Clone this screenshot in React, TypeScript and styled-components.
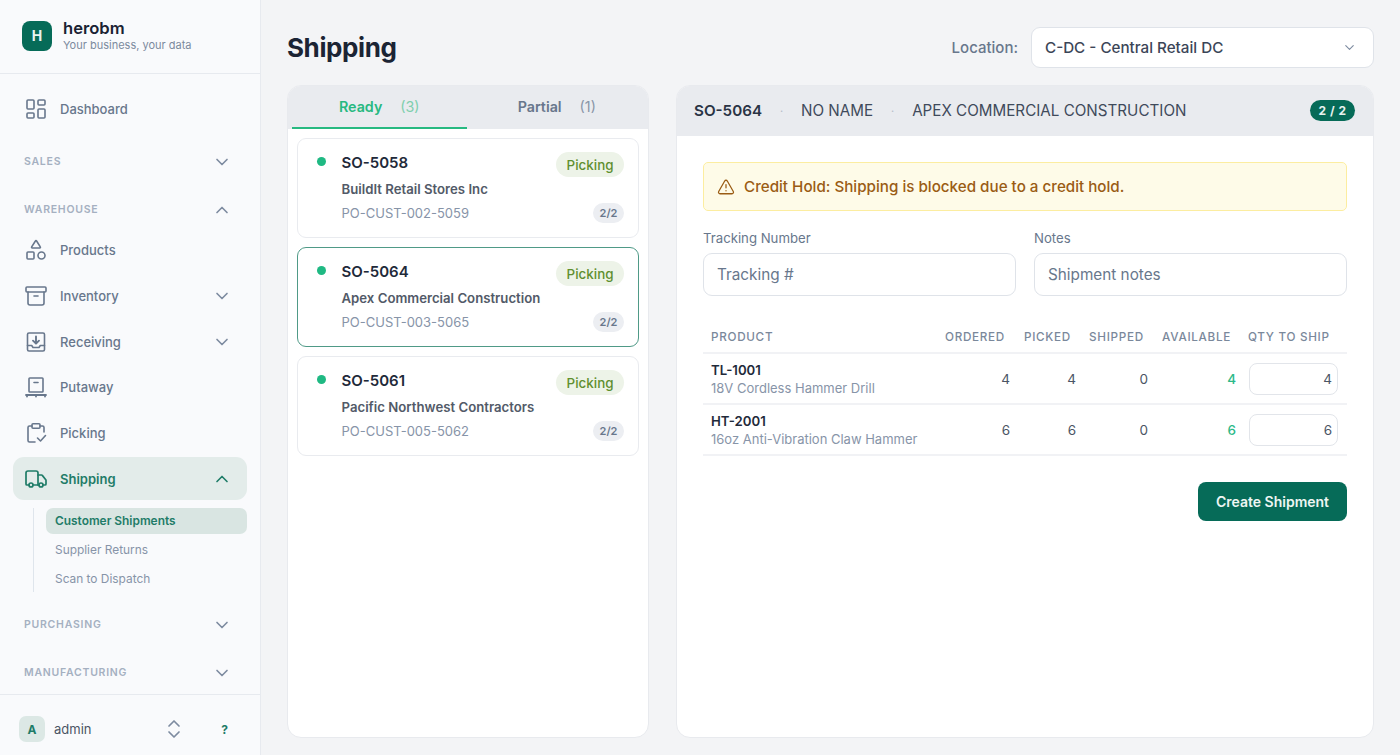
import React from "react";
import styled, { createGlobalStyle } from "styled-components";
import { LayoutDashboard, Shapes, Archive, Truck, ChevronDown, ChevronUp, TriangleAlert, ChevronsUpDown } from "lucide-react";

const Global = createGlobalStyle`
  html, body { margin: 0; padding: 0; height: 100%; overflow: hidden; background: #f3f4f6; }
  body { font-family: Inter, "Noto Sans", sans-serif; color: #1f2937; -webkit-font-smoothing: antialiased; }
  #root { height: 100%; }
  * { box-sizing: border-box; }
`;

const Shell = styled.div`
  display: flex;
  width: 1400px;
  height: 755px;
  overflow: hidden;
`;

const Sidebar = styled.aside`
  width: 261px;
  flex: none;
  display: flex;
  flex-direction: column;
  background: #f9fafc;
  border-right: 1px solid #e7eaef;
`;

const Brand = styled.div`
  height: 74px;
  flex: none;
  display: flex;
  align-items: center;
  gap: 11px;
  padding: 0 0 2px 22px;
  border-bottom: 1px solid #e7eaef;
`;

const LogoMark = styled.div`
  width: 30px;
  height: 30px;
  border-radius: 8px;
  background: #066b58;
  color: #e8f3ef;
  font-size: 14px;
  font-weight: 700;
  display: flex;
  align-items: center;
  justify-content: center;
`;

const BrandText = styled.div`
  display: flex;
  flex-direction: column;
  gap: 2px;
`;

const BrandName = styled.div`
  font-size: 16.6px;
  line-height: 18px;
  font-weight: 600;
  color: #1a2233;
`;

const BrandTag = styled.div`
  font-size: 11px;
  line-height: 13px;
  color: #7c8a9e;
`;

const Nav = styled.nav`
  flex: 1;
  display: flex;
  flex-direction: column;
  padding: 13px 13px 0;
`;

const NavRow = styled.div<{ $active?: boolean }>`
  height: 43px;
  margin-bottom: 2.7px;
  flex: none;
  display: flex;
  align-items: center;
  padding: 0 15px 0 11px;
  gap: 12px;
  border-radius: 11px;
  background: ${(p) => (p.$active ? "#e3ecea" : "transparent")};
  color: ${(p) => (p.$active ? "#1f7c68" : "#68778c")};
  font-size: 13px;
  font-weight: ${(p) => (p.$active ? 600 : 500)};
`;

const IconSlot = styled.span`
  width: 24px;
  height: 24px;
  flex: none;
  display: flex;
  align-items: center;
  justify-content: center;
`;

const NavLabel = styled.span`
  flex: 1;
`;

const SectionRow = styled.div<{ $mt: number; $mb: number }>`
  height: 20px;
  flex: none;
  margin-top: ${(p) => p.$mt}px;
  margin-bottom: ${(p) => p.$mb}px;
  display: flex;
  align-items: center;
  justify-content: space-between;
  padding: 0 15px 0 11px;
  font-size: 10.5px;
  font-weight: 600;
  letter-spacing: 0.75px;
  color: #a5b0c1;
`;

const Chevron = styled.span<{ $color?: string }>`
  display: flex;
  color: ${(p) => p.$color ?? "#7d8ba0"};
`;

const SubList = styled.div`
  margin: 5px 0 0 20px;
  padding-left: 12px;
  border-left: 1px solid #dfe5ec;
  display: flex;
  flex-direction: column;
  gap: 3px;
`;

const SubItem = styled.div<{ $active?: boolean }>`
  height: 26px;
  display: flex;
  align-items: center;
  padding-left: 9px;
  border-radius: 7px;
  font-size: 11.9px;
  font-weight: ${(p) => (p.$active ? 600 : 400)};
  color: ${(p) => (p.$active ? "#1f7c68" : "#8794a8")};
  background: ${(p) => (p.$active ? "#d9e5e2" : "transparent")};
`;

const UserBar = styled.div`
  height: 61px;
  flex: none;
  display: flex;
  align-items: center;
  padding: 8px 32px 0 19px;
  border-top: 1px solid #e7eaef;
`;

const Avatar = styled.div`
  width: 26px;
  height: 26px;
  border-radius: 7px;
  background: #dce8e5;
  color: #1f7c68;
  font-size: 12px;
  font-weight: 700;
  display: flex;
  align-items: center;
  justify-content: center;
`;

const UserName = styled.div`
  margin-left: 9px;
  flex: 1;
  font-size: 13px;
  color: #4b5565;
`;

const Help = styled.div`
  margin-left: 35px;
  font-size: 12px;
  font-weight: 700;
  color: #1f7c68;
`;

const Main = styled.main`
  flex: 1;
  min-width: 0;
  display: flex;
  flex-direction: column;
  padding: 0 26px 17px 26px;
`;

const TopBar = styled.header`
  height: 85px;
  flex: none;
  display: flex;
  align-items: center;
  justify-content: space-between;
  padding-top: 10px;
`;

const Title = styled.h1`
  margin: 0;
  font-size: 26px;
  line-height: 34px;
  font-weight: 700;
  letter-spacing: -0.4px;
  color: #1b2434;
`;

const LocationGroup = styled.div`
  display: flex;
  align-items: center;
  gap: 13px;
`;

const LocationLabel = styled.label`
  font-size: 15px;
  font-weight: 500;
  color: #68778c;
`;

const LocationSelect = styled.div`
  width: 343px;
  height: 41px;
  display: flex;
  align-items: center;
  justify-content: space-between;
  padding: 0 16px 0 13px;
  background: #fff;
  border: 1px solid #dfe3e9;
  border-radius: 9px;
  font-size: 15.2px;
  font-weight: 500;
  color: #3b4557;
`;

const Columns = styled.div`
  flex: 1;
  min-height: 0;
  display: flex;
  gap: 27px;
`;

const Panel = styled.section<{ $width?: string }>`
  ${(p) => (p.$width ? `width: ${p.$width}; flex: none;` : "flex: 1; min-width: 0;")}
  display: flex;
  flex-direction: column;
  background: #fff;
  border: 1px solid #e8eaee;
  border-radius: 14px;
  overflow: hidden;
`;

const Tabs = styled.div`
  height: 43px;
  flex: none;
  display: flex;
  gap: 3px;
  padding: 0 4px;
  background: #e9ebef;
`;

const Tab = styled.div<{ $active?: boolean }>`
  flex: 1;
  display: flex;
  align-items: center;
  justify-content: center;
  gap: 18px;
  padding-bottom: 1px;
  font-size: 14.3px;
  font-weight: 600;
  color: ${(p) => (p.$active ? "#27b981" : "#68778c")};
  border-bottom: 2px solid ${(p) => (p.$active ? "#27b981" : "transparent")};
`;

const TabCount = styled.span<{ $active?: boolean }>`
  font-weight: 400;
  color: ${(p) => (p.$active ? "#7fcfae" : "#8a96a8")};
`;

const CardList = styled.div`
  display: flex;
  flex-direction: column;
  gap: 9px;
  padding: 9px 9px 9px 8.5px;
`;

const Card = styled.article<{ $selected?: boolean }>`
  height: 100px;
  display: grid;
  grid-template-columns: 44px 1fr auto;
  grid-template-rows: 32px 21px 26px;
  padding: 8px 14px 0 0;
  background: #fff;
  border: 1px solid ${(p) => (p.$selected ? "#4f9a87" : "#e9ebef")};
  border-radius: 9px;
`;

const Dot = styled.span`
  width: 9px;
  height: 9px;
  margin: 10px 0 0 19px;
  border-radius: 50%;
  background: #1fb983;
`;

const OrderNo = styled.div`
  font-size: 15px;
  font-weight: 600;
  line-height: 20px;
  margin-top: 6px;
  color: #1f2a3a;
`;

const StatusPill = styled.span`
  height: 25px;
  margin-top: 5px;
  padding: 0 10.5px;
  border-radius: 13px;
  display: flex;
  align-items: center;
  background: #edf3e8;
  color: #5f8f2f;
  font-size: 13.4px;
  font-weight: 500;
`;

const Customer = styled.div`
  grid-column: 2 / 4;
  font-size: 13.2px;
  line-height: 21px;
  font-weight: 600;
  color: #525a68;
`;

const PoNumber = styled.div`
  grid-column: 2;
  font-size: 13px;
  line-height: 26px;
  color: #8794a8;
`;

const CountPill = styled.span`
  align-self: center;
  justify-self: end;
  min-width: 31px;
  height: 20px;
  border-radius: 10px;
  display: flex;
  align-items: center;
  justify-content: center;
  background: #eceef2;
  color: #68778c;
  font-size: 11px;
  font-weight: 600;
`;

const DetailHead = styled.div`
  height: 50px;
  flex: none;
  display: flex;
  align-items: center;
  padding: 0 18px 1px 17px;
  background: #e9ebef;
  font-size: 15.2px;
  color: #3f4a5b;
`;

const DetailId = styled.span`
  font-weight: 600;
  color: #2a3445;
`;

const Sep = styled.span`
  width: 39px;
  text-align: center;
  color: #b5bdc9;
  font-size: 11px;
`;

const DetailSpacer = styled.span`
  flex: 1;
`;

const ProgressPill = styled.span`
  width: 45px;
  height: 21px;
  border-radius: 11px;
  background: #066b58;
  color: #e8f3ef;
  font-size: 12px;
  font-weight: 700;
  letter-spacing: 0.5px;
  display: flex;
  align-items: center;
  justify-content: center;
`;

const DetailBody = styled.div`
  padding: 26px 26px 0;
  display: flex;
  flex-direction: column;
`;

const Alert = styled.div`
  height: 49px;
  display: flex;
  align-items: center;
  gap: 9px;
  padding: 0 13px;
  background: #fefbe8;
  border: 1px solid #fcedA0;
  border-radius: 5px;
  color: #9a5c14;
  font-size: 15.2px;
  font-weight: 500;
`;

const FieldRow = styled.div`
  margin-top: 19px;
  display: grid;
  grid-template-columns: 1fr 1fr;
  gap: 18px;
`;

const Field = styled.div`
  display: flex;
  flex-direction: column;
  gap: 7px;
`;

const FieldLabel = styled.label`
  font-size: 13.2px;
  line-height: 16px;
  font-weight: 400;
  color: #68778c;
`;

const TextInput = styled.input`
  height: 43px;
  width: 100%;
  padding: 0 13px;
  border: 1px solid #dfe3e9;
  border-radius: 9px;
  background: #fff;
  font: 400 15.3px Inter, sans-serif;
  outline: none;
  &::placeholder { color: #68778c; opacity: 1; }
`;

const ProductTable = styled.div`
  margin-top: 26px;
  display: flex;
  flex-direction: column;
`;

const gridCols = "1fr 78px 66px 72px 88px 107px";

const TableHead = styled.div`
  height: 32px;
  display: grid;
  grid-template-columns: ${gridCols};
  align-items: center;
  border-bottom: 2px solid #f1f2f5;
  font-size: 11.7px;
  font-weight: 500;
  letter-spacing: 0.7px;
  color: #7a889b;
`;

const HeadCell = styled.div<{ $left?: boolean }>`
  padding: 0 9px 0 ${(p) => (p.$left ? "8px" : "9px")};
  white-space: nowrap;
  text-align: ${(p) => (p.$left ? "left" : "right")};
`;

const TableRow = styled.div`
  height: 51px;
  display: grid;
  grid-template-columns: ${gridCols};
  align-items: center;
  border-bottom: 2px solid #f1f2f5;
`;

const ProductCell = styled.div`
  padding: 1px 8px 0;
  display: flex;
  flex-direction: column;
  gap: 1px;
`;

const Sku = styled.div`
  font-size: 13.2px;
  line-height: 17px;
  font-weight: 600;
  color: #1f2a3a;
`;

const ProductName = styled.div`
  font-size: 13px;
  line-height: 17px;
  color: #8794a8;
`;

const NumCell = styled.div<{ $accent?: boolean }>`
  padding: 0 4px 0 0;
  text-align: right;
  font-size: 13.5px;
  font-weight: ${(p) => (p.$accent ? 500 : 400)};
  color: ${(p) => (p.$accent ? "#2bb988" : "#4b5565")};
`;

const QtyCell = styled.div`
  padding: 0 9px;
`;

const QtyInput = styled.input`
  width: 100%;
  height: 32px;
  padding: 0 5px;
  text-align: right;
  border: 1px solid #e2e5ea;
  border-radius: 8px;
  background: #fff;
  color: #4b5565;
  font: 400 13.5px Inter, sans-serif;
  outline: none;
`;

const Actions = styled.div`
  margin-top: 26px;
  display: flex;
  justify-content: flex-end;
`;

const PrimaryButton = styled.button`
  width: 149px;
  height: 39px;
  border: none;
  border-radius: 8px;
  background: #066b58;
  color: #eef6f3;
  font: 600 14px Inter, sans-serif;
`;

const IconSvg = styled.svg`
  display: block;
`;

const Glyph: React.FC<{ children: React.ReactNode }> = ({ children }) => (
  <IconSvg width="24" height="24" viewBox="0 0 24 24" fill="none" stroke="currentColor" strokeWidth="1.6" strokeLinecap="round" strokeLinejoin="round">
    {children}
  </IconSvg>
);

const ReceivingIcon = () => (
  <Glyph>
    <rect x="3.5" y="3" width="17" height="18" rx="1.5" />
    <path d="M12 6.5v7M9 10.7l3 3 3-3" strokeWidth="1.9" />
    <path d="M3.5 15.5h4.2l1.3 2h6l1.3-2h4.2" />
  </Glyph>
);

const PutawayIcon = () => (
  <Glyph>
    <rect x="5" y="3" width="14" height="14" rx="0.8" />
    <path d="M10 7.5h4" />
    <path d="M2 20h20" strokeWidth="1.8" />
    <path d="M3 20v1.5M12 20v1.5M21 20v1.5" strokeWidth="1.8" />
  </Glyph>
);

const PickingIcon = () => (
  <Glyph>
    <path d="M8 5H5.5A1.5 1.5 0 0 0 4 6.5v13A1.5 1.5 0 0 0 5.5 21H11" />
    <path d="M16 5h2.5A1.5 1.5 0 0 1 20 6.5V11" />
    <rect x="8" y="2.8" width="8" height="4.4" rx="1" />
    <path d="M13.5 17l3 3 5-5.5" />
  </Glyph>
);

const Down = () => <Chevron><ChevronDown size={20} strokeWidth={2} /></Chevron>;
const Up = ({ color }: { color?: string }) => <Chevron $color={color}><ChevronUp size={20} strokeWidth={2} /></Chevron>;

const orders = [
  { id: "SO-5058", customer: "BuildIt Retail Stores Inc", po: "PO-CUST-002-5059" },
  { id: "SO-5064", customer: "Apex Commercial Construction", po: "PO-CUST-003-5065", selected: true },
  { id: "SO-5061", customer: "Pacific Northwest Contractors", po: "PO-CUST-005-5062" },
];

const lines = [
  { sku: "TL-1001", name: "18V Cordless Hammer Drill", ordered: 4, picked: 4, shipped: 0, available: 4 },
  { sku: "HT-2001", name: "16oz Anti-Vibration Claw Hammer", ordered: 6, picked: 6, shipped: 0, available: 6 },
];

export default function App() {
  return (
    <Shell>
      <Global />
      <Sidebar>
        <Brand>
          <LogoMark>H</LogoMark>
          <BrandText>
            <BrandName>herobm</BrandName>
            <BrandTag>Your business, your data</BrandTag>
          </BrandText>
        </Brand>
        <Nav>
          <NavRow>
            <IconSlot><LayoutDashboard size={24} strokeWidth={1.6} /></IconSlot>
            <NavLabel>Dashboard</NavLabel>
          </NavRow>
          <SectionRow $mt={19} $mb={28}>SALES<Down /></SectionRow>
          <SectionRow $mt={0} $mb={9}>WAREHOUSE<Up /></SectionRow>
          <NavRow>
            <IconSlot><Shapes size={24} strokeWidth={1.6} /></IconSlot>
            <NavLabel>Products</NavLabel>
          </NavRow>
          <NavRow>
            <IconSlot><Archive size={24} strokeWidth={1.6} /></IconSlot>
            <NavLabel>Inventory</NavLabel>
            <Down />
          </NavRow>
          <NavRow>
            <IconSlot><ReceivingIcon /></IconSlot>
            <NavLabel>Receiving</NavLabel>
            <Down />
          </NavRow>
          <NavRow>
            <IconSlot><PutawayIcon /></IconSlot>
            <NavLabel>Putaway</NavLabel>
          </NavRow>
          <NavRow>
            <IconSlot><PickingIcon /></IconSlot>
            <NavLabel>Picking</NavLabel>
          </NavRow>
          <NavRow $active>
            <IconSlot><Truck size={26} strokeWidth={1.7} /></IconSlot>
            <NavLabel>Shipping</NavLabel>
            <Up color="#1f7c68" />
          </NavRow>
          <SubList>
            <SubItem $active>Customer Shipments</SubItem>
            <SubItem>Supplier Returns</SubItem>
            <SubItem>Scan to Dispatch</SubItem>
          </SubList>
          <SectionRow $mt={23} $mb={28}>PURCHASING<Down /></SectionRow>
          <SectionRow $mt={0} $mb={0}>MANUFACTURING<Down /></SectionRow>
        </Nav>
        <UserBar>
          <Avatar>A</Avatar>
          <UserName>admin</UserName>
          <Chevron><ChevronsUpDown size={24} strokeWidth={1.7} /></Chevron>
          <Help>?</Help>
        </UserBar>
      </Sidebar>
      <Main>
        <TopBar>
          <Title>Shipping</Title>
          <LocationGroup>
            <LocationLabel>Location:</LocationLabel>
            <LocationSelect>
              C-DC - Central Retail DC
              <Chevron><ChevronDown size={15} strokeWidth={1.8} /></Chevron>
            </LocationSelect>
          </LocationGroup>
        </TopBar>
        <Columns>
          <Panel $width="362px">
            <Tabs>
              <Tab $active>Ready <TabCount $active>(3)</TabCount></Tab>
              <Tab>Partial <TabCount>(1)</TabCount></Tab>
            </Tabs>
            <CardList>
              {orders.map((o) => (
                <Card key={o.id} $selected={o.selected}>
                  <Dot />
                  <OrderNo>{o.id}</OrderNo>
                  <StatusPill>Picking</StatusPill>
                  <span />
                  <Customer>{o.customer}</Customer>
                  <span />
                  <PoNumber>{o.po}</PoNumber>
                  <CountPill>2/2</CountPill>
                </Card>
              ))}
            </CardList>
          </Panel>
          <Panel>
            <DetailHead>
              <DetailId>SO-5064</DetailId>
              <Sep>·</Sep>
              <span>NO NAME</span>
              <Sep>·</Sep>
              <span>APEX COMMERCIAL CONSTRUCTION</span>
              <DetailSpacer />
              <ProgressPill>2 / 2</ProgressPill>
            </DetailHead>
            <DetailBody>
              <Alert>
                <TriangleAlert size={18} strokeWidth={1.7} />
                Credit Hold: Shipping is blocked due to a credit hold.
              </Alert>
              <FieldRow>
                <Field>
                  <FieldLabel>Tracking Number</FieldLabel>
                  <TextInput placeholder="Tracking #" readOnly />
                </Field>
                <Field>
                  <FieldLabel>Notes</FieldLabel>
                  <TextInput placeholder="Shipment notes" readOnly />
                </Field>
              </FieldRow>
              <ProductTable>
                <TableHead>
                  <HeadCell $left>PRODUCT</HeadCell>
                  <HeadCell>ORDERED</HeadCell>
                  <HeadCell>PICKED</HeadCell>
                  <HeadCell>SHIPPED</HeadCell>
                  <HeadCell>AVAILABLE</HeadCell>
                  <HeadCell $left>QTY TO SHIP</HeadCell>
                </TableHead>
                {lines.map((l) => (
                  <TableRow key={l.sku}>
                    <ProductCell>
                      <Sku>{l.sku}</Sku>
                      <ProductName>{l.name}</ProductName>
                    </ProductCell>
                    <NumCell>{l.ordered}</NumCell>
                    <NumCell>{l.picked}</NumCell>
                    <NumCell>{l.shipped}</NumCell>
                    <NumCell $accent>{l.available}</NumCell>
                    <QtyCell><QtyInput defaultValue={l.available} /></QtyCell>
                  </TableRow>
                ))}
              </ProductTable>
              <Actions>
                <PrimaryButton>Create Shipment</PrimaryButton>
              </Actions>
            </DetailBody>
          </Panel>
        </Columns>
      </Main>
    </Shell>
  );
}
